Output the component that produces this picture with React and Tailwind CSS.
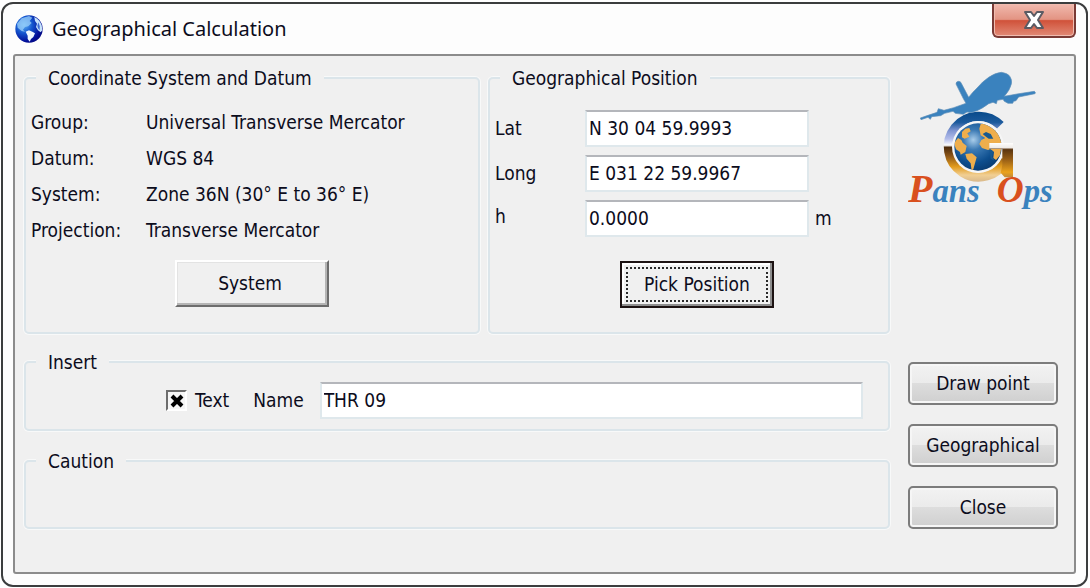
import { useState } from 'react'

const DATUM_ROWS = [
  { label: 'Group:', value: 'Universal Transverse Mercator' },
  { label: 'Datum:', value: 'WGS 84' },
  { label: 'System:', value: 'Zone 36N (30° E to 36° E)' },
  { label: 'Projection:', value: 'Transverse Mercator' },
]

const INPUT_CLASS =
  'h-[37px] min-w-0 border-2 border-[#dfe8ec] border-t-[#b4b6bb] bg-white px-[2px] pb-[2px] outline-none'

function GlobeIcon() {
  return (
    <svg className="h-7 w-7 shrink-0" viewBox="0 0 84 84" aria-hidden="true">
      <defs>
        <radialGradient id="sea" cx="0.32" cy="0.35" r="0.75">
          <stop offset="0" stopColor="#5fb4f5" />
          <stop offset="0.4" stopColor="#1557cf" />
          <stop offset="0.8" stopColor="#02109a" />
          <stop offset="1" stopColor="#02067e" />
        </radialGradient>
      </defs>
      <circle cx="42" cy="42" r="41" fill="url(#sea)" />
      <path d="M6 26 L20 10 L42 3 L52 8 L44 18 L50 24 L40 34 L30 36 L24 44 L30 50 L20 48 L8 38Z" fill="#9bd0fa" opacity="0.75" />
      <path d="M32 50 L42 46 L52 50 L60 55 L55 66 L48 72 L44 80 L38 72 L38 62Z" fill="#eef7ff" />
      <path d="M58 6 Q74 14 80 30 L82 46 L77 52 L69 46 L63 36 L66 26 L60 18Z" fill="#c6e2fb" />
      <path d="M70 22 Q77 34 74 46 Q67 40 67 32Z" fill="#3d6bd4" />
    </svg>
  )
}

function PansOpsLogo() {
  return (
    <svg className="w-full" viewBox="28 30 450 426" role="img" aria-label="Pans Ops">
      <defs>
        <linearGradient id="ring" gradientUnits="userSpaceOnUse" x1="0" y1="158" x2="0" y2="366">
          <stop offset="0" stopColor="#0a4c8c" />
          <stop offset="0.14" stopColor="#1c5a9c" />
          <stop offset="0.26" stopColor="#8095d2" />
          <stop offset="0.38" stopColor="#b3bdea" />
          <stop offset="0.47" stopColor="#ffffff" />
          <stop offset="0.5" stopColor="#4d2c0c" />
          <stop offset="0.62" stopColor="#8a5417" />
          <stop offset="0.78" stopColor="#e39c1d" />
          <stop offset="0.9" stopColor="#f1cf94" />
          <stop offset="1" stopColor="#d8b88a" />
        </linearGradient>
        <linearGradient id="stem" gradientUnits="userSpaceOnUse" x1="0" y1="248" x2="0" y2="352">
          <stop offset="0" stopColor="#ffffff" />
          <stop offset="0.14" stopColor="#f0ece8" />
          <stop offset="0.2" stopColor="#5a3510" />
          <stop offset="0.5" stopColor="#9a6016" />
          <stop offset="0.85" stopColor="#eba21c" />
          <stop offset="1" stopColor="#c08a3a" />
        </linearGradient>
        <radialGradient id="ocean" cx="0.4" cy="0.35" r="0.7">
          <stop offset="0" stopColor="#a9cdea" />
          <stop offset="0.3" stopColor="#3c7ab4" />
          <stop offset="0.7" stopColor="#0d4e8e" />
          <stop offset="1" stopColor="#083a70" />
        </radialGradient>
        <clipPath id="globe">
          <circle cx="238" cy="261" r="71" />
        </clipPath>
      </defs>

      <path d="M305 196 A91 91 0 1 0 322 300" fill="none" stroke="url(#ring)" strokeWidth="28" />
      <circle cx="238" cy="261" r="78" fill="#f6f6f6" />
      <circle cx="238" cy="261" r="71" fill="url(#ocean)" />
      <g clipPath="url(#globe)" fill="#efae4c">
        <path d="M190 216 L200 206 L212 204 L216 214 L206 220 L212 230 L198 236 L190 232Z" />
        <path d="M166 250 L178 234 L188 240 L192 248 L204 258 L200 276 L186 284 L184 276 L172 268Z" />
        <path d="M200 282 L220 280 L234 292 L230 306 L224 328 L219 332 L216 310 L204 296Z" />
        <path d="M242 206 L246 192 L262 192 L284 204 L300 222 L310 250 L304 286 L292 300 L284 294 L286 276 L276 268 L268 270 L250 264 L242 252 L248 240 L260 234 L246 226Z" />
      </g>
      <path d="M252 222 L262 216 L276 222 L284 236 L270 236 L262 230Z" fill="#18598f" clipPath="url(#globe)" />
      <path d="M272 268 L284 274 L280 290 L288 302 L276 296Z" fill="#18598f" clipPath="url(#globe)" />
      <path d="M272 249 H343 V352 H318 L306 338 L311 316 V267 H272Z" fill="url(#stem)" />

      <path
        d="M65 174 L88 166 L115 157 L119 146 L136 151 L165 143 L202 130 L195 118 L172 72 Q172 64 180 64 Q186 64 188 70 L210 112 Q222 96 235 84 Q252 64 270 52 Q290 38 308 37 Q328 40 334 50 Q341 60 338 72 Q334 90 317 109 L355 102 L407 94 Q412 97 409 101 L360 111 L352 122 L345 124 L342 130 H328 L317 124 L313 118 L296 121 L293 131 L283 127 L270 131 Q250 146 235 152 Q216 160 205 156 L194 163 L170 160 L163 154 L138 160 L126 167 L99 170 L95 178 L88 172 L67 179Z"
        fill="#3a82be"
        stroke="#5f8fb8"
        strokeWidth="2"
      />

      <g fontFamily="'Liberation Serif', serif" fontStyle="italic" fontWeight="700" fill="#3a82be">
        <text x="28" y="426">
          <tspan fontSize="120" fill="#d9501e">P</tspan>
          <tspan fontSize="98">ans</tspan>
        </text>
        <text x="294" y="426">
          <tspan fontSize="112" fill="#d9501e">O</tspan>
          <tspan fontSize="98">ps</tspan>
        </text>
      </g>
    </svg>
  )
}

function GroupBox({ title, className = '', children }) {
  return (
    <fieldset
      className={`min-w-0 rounded-[5px] border-2 border-[#dbe5ea] px-[5px] shadow-[0_0_0_1px_#f8f9f9] ${className}`}
    >
      <legend className="ml-[5px] bg-[#f0f0f0] px-3 leading-6">{title}</legend>
      {children}
    </fieldset>
  )
}

function DialogButton({ children }) {
  return (
    <button
      type="button"
      className="h-[43px] w-full rounded-[5px] border-2 border-[#7c7c7c] bg-[linear-gradient(#f2f2f2,#ebebeb_48%,#dddddd_50%,#cfcfcf)] pb-px shadow-[inset_0_0_0_2px_#f6f6f6]"
    >
      {children}
    </button>
  )
}

export default function App() {
  const [lat, setLat] = useState('N 30 04 59.9993')
  const [long, setLong] = useState('E 031 22 59.9967')
  const [height, setHeight] = useState('0.0000')
  const [name, setName] = useState('THR 09')
  const [insertText, setInsertText] = useState(true)

  return (
    <div className="flex min-h-screen flex-col bg-white pt-[2px] pr-[2px] pb-[2px] pl-px font-['DejaVu_Sans_Condensed','Noto_Sans',sans-serif] text-[19px] text-[#0c0c1c]">
      <div className="flex flex-1 flex-col rounded-[12px] border-2 border-[#3b3d3e] bg-[#fdfdfd] px-[10px] pb-[11px]">
        <header className="flex h-[50px] items-start justify-between">
          <div className="flex h-full items-center gap-[9px] pl-[2px]">
            <GlobeIcon />
            <h1 className="font-['Noto_Sans',sans-serif] text-[20px]">Geographical Calculation</h1>
          </div>
          <button
            type="button"
            aria-label="Close window"
            className="flex h-[34px] w-[84px] items-center justify-center rounded-b-[6px] border-2 border-t-0 border-[#7a3a35] bg-[linear-gradient(#f0b9ae,#e39483_48%,#d0523a_52%,#e28a76)] shadow-[inset_0_0_0_1px_#f0bcb0]"
          >
            <svg className="h-5 w-6" viewBox="0 0 24 20" aria-hidden="true">
              <path
                d="M3 2 H9 L12 6 L15 2 H21 L16 10 L21 18 H15 L12 14 L9 18 H3 L8 10Z"
                fill="#ffffff"
                stroke="#5b5b63"
                strokeWidth="2"
                strokeLinejoin="round"
              />
            </svg>
          </button>
        </header>

        <main className="flex flex-1 gap-[18px] rounded-[3px] border-2 border-[#8c8c8c] bg-[#f0f0f0] pt-[10px] pr-4 pb-[43px] pl-[9px]">
          <div className="flex min-w-0 flex-1 flex-col">
            <div className="grid grid-cols-[1fr_402px] gap-2">
              <GroupBox title="Coordinate System and Datum" className="pb-6">
                <dl className="grid grid-cols-[115px_1fr] pt-[14px] leading-9">
                  {DATUM_ROWS.map((row) => (
                    <div key={row.label} className="contents">
                      <dt>{row.label}</dt>
                      <dd>{row.value}</dd>
                    </div>
                  ))}
                </dl>
                <div className="mt-3 flex justify-center">
                  <button
                    type="button"
                    className="h-[47px] w-[154px] border-2 border-t-white border-r-[#6d6d6d] border-b-[#6d6d6d] border-l-white pr-1 shadow-[inset_-2px_-2px_0_#b5b5b5,inset_1px_1px_0_#e3e3e3]"
                  >
                    System
                  </button>
                </div>
              </GroupBox>

              <GroupBox title="Geographical Position" className="pb-6">
                <div className="grid grid-cols-[90px_224px_1fr] items-center gap-y-2 pt-5">
                  <label htmlFor="lat">Lat</label>
                  <input id="lat" className={INPUT_CLASS} value={lat} onChange={(e) => setLat(e.target.value)} />
                  <span />
                  <label htmlFor="long">Long</label>
                  <input id="long" className={INPUT_CLASS} value={long} onChange={(e) => setLong(e.target.value)} />
                  <span />
                  <label htmlFor="height" className="pb-1">h</label>
                  <input id="height" className={INPUT_CLASS} value={height} onChange={(e) => setHeight(e.target.value)} />
                  <span className="pl-[6px]">m</span>
                  <button
                    type="button"
                    className="col-start-2 mt-4 h-[47px] w-[154px] justify-self-center border-2 border-[#1c1212] p-[4px] shadow-[inset_-2px_-2px_0_#8e8e8e,inset_2px_2px_0_#ffffff]"
                  >
                    <span className="flex h-full items-center justify-center border-2 border-dotted border-[#2a2a2a]">
                      Pick Position
                    </span>
                  </button>
                </div>
              </GroupBox>
            </div>

            <GroupBox title="Insert" className="mt-4 pb-[10px]">
              <div className="flex items-center pt-2 pr-5 pl-[135px]">
                <label className="flex items-center gap-2">
                  <span className="grid h-[21px] w-[21px] place-items-center border-2 border-t-[#6d6d6d] border-r-white border-b-white border-l-[#6d6d6d] bg-[#f6f6f6]">
                    <input
                      type="checkbox"
                      className="col-start-1 row-start-1 h-4 w-4 appearance-none"
                      checked={insertText}
                      onChange={(e) => setInsertText(e.target.checked)}
                    />
                    {insertText && (
                      <svg className="pointer-events-none col-start-1 row-start-1 h-4 w-4" viewBox="0 0 16 16" aria-hidden="true">
                        <path d="M3 3 L13 13 M13 3 L3 13" stroke="#000000" strokeWidth="4" />
                      </svg>
                    )}
                  </span>
                  Text
                </label>
                <label htmlFor="name" className="pr-4 pl-6">
                  Name
                </label>
                <input
                  id="name"
                  className={`${INPUT_CLASS} flex-1`}
                  value={name}
                  onChange={(e) => setName(e.target.value)}
                />
              </div>
            </GroupBox>

            <GroupBox title="Caution" className="mt-[18px] flex-1">
              <p className="h-[54px]" />
            </GroupBox>
          </div>

          <aside className="flex w-[150px] shrink-0 flex-col justify-between pt-1">
            <PansOpsLogo />
            <div className="flex flex-col gap-[19px]">
              <DialogButton>Draw point</DialogButton>
              <DialogButton>Geographical</DialogButton>
              <DialogButton>Close</DialogButton>
            </div>
          </aside>
        </main>
      </div>
    </div>
  )
}
